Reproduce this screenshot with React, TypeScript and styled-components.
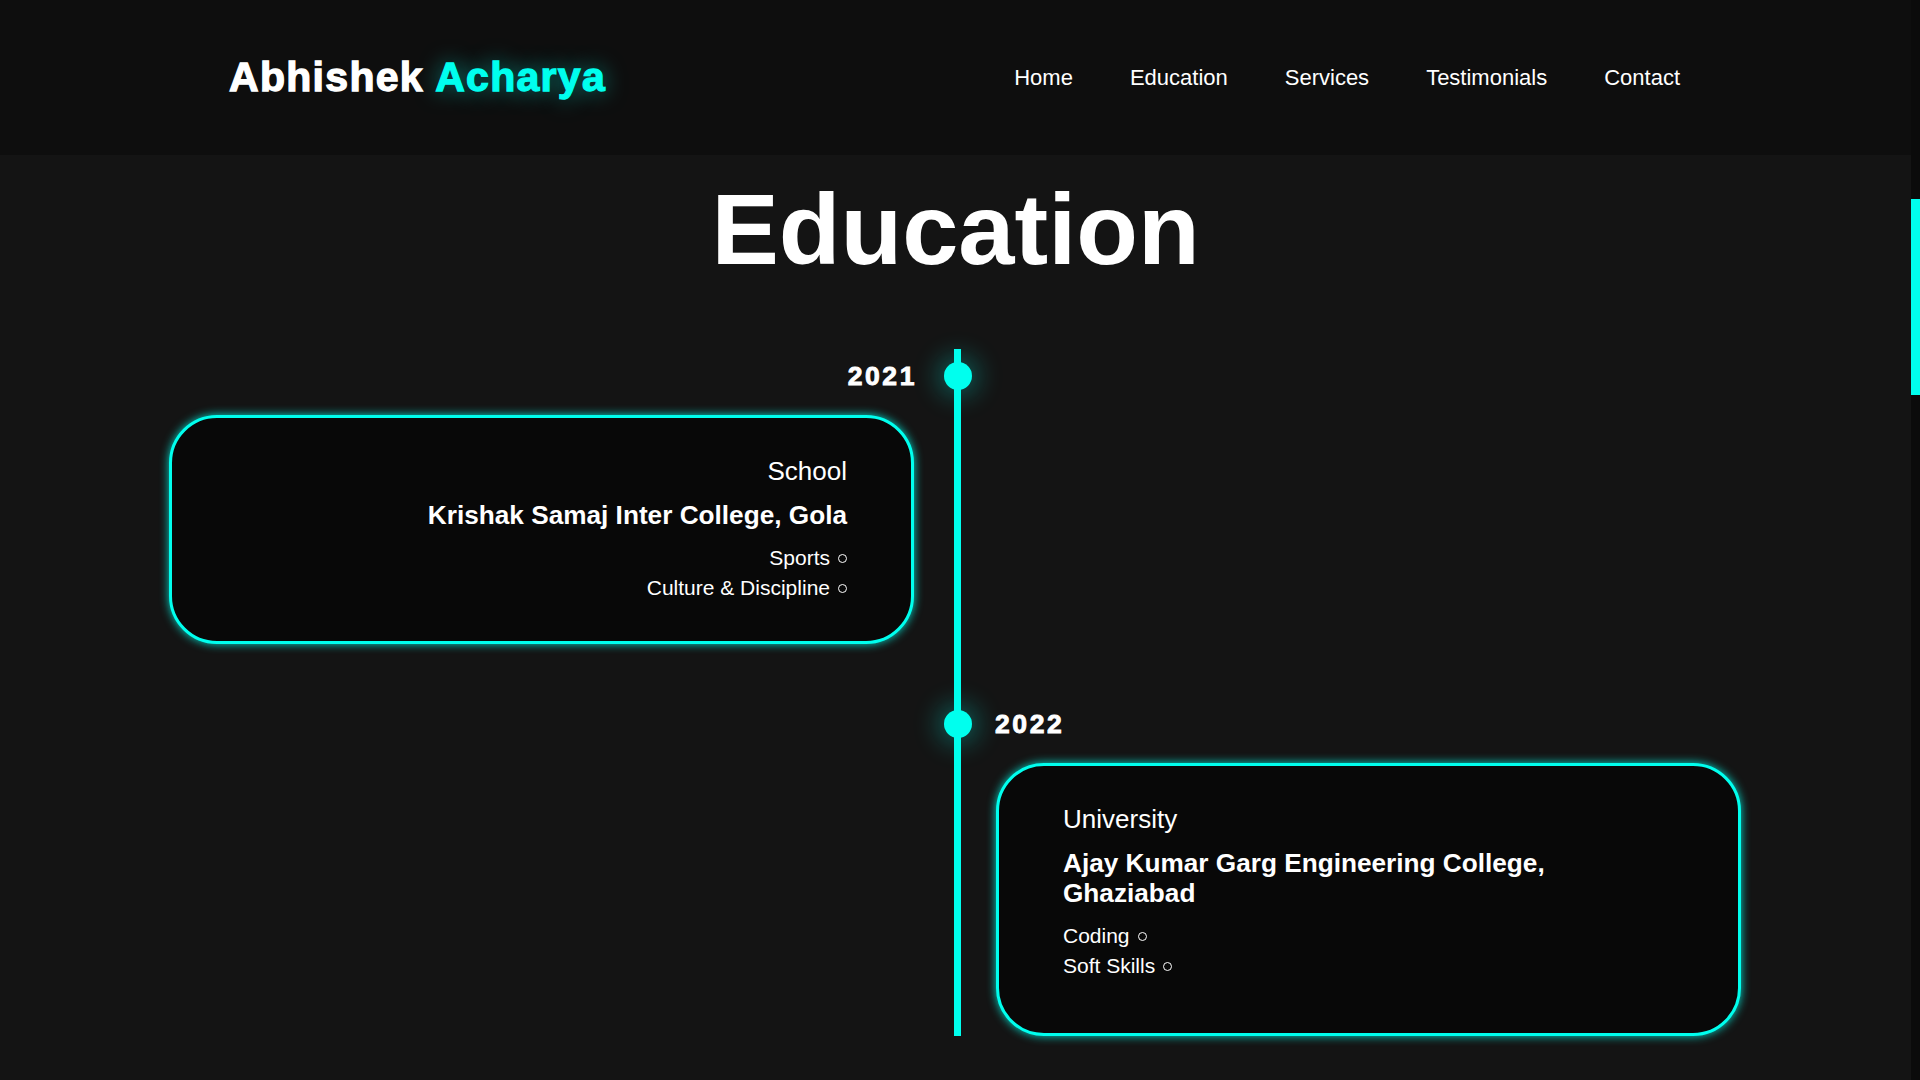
import React from "react";
import styled, { createGlobalStyle } from "styled-components";

const CYAN = "#00ffee";

type Side = "left" | "right";

const GlobalStyle = createGlobalStyle`
  *, *::before, *::after { box-sizing: border-box; }
  html, body {
    margin: 0;
    padding: 0;
    height: 100%;
    overflow: hidden;
    background: #141414;
  }
  body {
    font-family: "Liberation Sans", Arial, Helvetica, sans-serif;
    color: #ffffff;
  }
`;

const Shell = styled.div`
  display: flex;
  width: 100vw;
  height: 100vh;
  overflow: hidden;
`;

const Page = styled.div`
  flex: 1;
  min-width: 0;
  display: flex;
  flex-direction: column;
  background: #141414;
`;

const ScrollTrack = styled.div`
  width: 9px;
  flex-shrink: 0;
  background: #0b0b0b;
  padding-top: 199px;
`;

const ScrollThumb = styled.div`
  height: 196px;
  background: ${CYAN};
`;

const Header = styled.header`
  height: 155px;
  flex-shrink: 0;
  background: #0e0e0e;
  display: flex;
  align-items: center;
  justify-content: space-between;
  padding: 0 231px 0 229px;
`;

const Logo = styled.a`
  font-size: 41px;
  font-weight: 700;
  letter-spacing: 1.3px;
  color: #ffffff;
  -webkit-text-stroke: 1.3px currentColor;
  text-decoration: none;
  white-space: nowrap;
`;

const LogoAccent = styled.span`
  color: ${CYAN};
  text-shadow: 0 0 22px rgba(0, 255, 238, 0.55);
`;

const Nav = styled.nav`
  display: flex;
  align-items: center;
  gap: 57px;
`;

const NavLink = styled.a`
  font-size: 22px;
  color: #ffffff;
  text-decoration: none;
  white-space: nowrap;
`;

const Section = styled.section`
  display: flex;
  flex-direction: column;
  align-items: center;
  padding-top: 17px;
`;

const Title = styled.h2`
  margin: 0;
  font-size: 101px;
  line-height: 115px;
  font-weight: 700;
  color: #ffffff;
`;

const Timeline = styled.div`
  margin-top: 62px;
  display: grid;
  grid-template-columns: 787px 7px 783px;
`;

const Line = styled.div<{ $rows: number }>`
  grid-column: 2;
  grid-row: 1 / ${(p) => p.$rows + 1};
  background: ${CYAN};
`;

const YearLabel = styled.div<{ $side: Side; $row: number; $first: boolean }>`
  grid-column: ${(p) => (p.$side === "left" ? 1 : 3)};
  grid-row: ${(p) => p.$row};
  margin-top: ${(p) => (p.$first ? 0 : 53)}px;
  height: 54px;
  display: flex;
  align-items: center;
  justify-content: ${(p) => (p.$side === "left" ? "flex-end" : "flex-start")};
  padding: ${(p) => (p.$side === "left" ? "0 37px 0 0" : "0 0 0 34px")};
  font-size: 26.5px;
  font-weight: 700;
  letter-spacing: 2.6px;
  -webkit-text-stroke: 0.9px #ffffff;
  color: #ffffff;
`;

const Dot = styled.span<{ $row: number }>`
  grid-column: 2;
  grid-row: ${(p) => p.$row};
  align-self: end;
  justify-self: center;
  width: 28px;
  height: 28px;
  margin: 0 -10.5px 13px;
  border-radius: 50%;
  background: ${CYAN};
  box-shadow: 0 0 26px 6px rgba(0, 255, 238, 0.3);
  position: relative;
  z-index: 1;
`;

const Card = styled.article<{ $side: Side; $row: number; $padBottom: number }>`
  grid-column: ${(p) => (p.$side === "left" ? 1 : 3)};
  grid-row: ${(p) => p.$row};
  justify-self: ${(p) => (p.$side === "left" ? "end" : "start")};
  width: 745px;
  margin: ${(p) => (p.$side === "left" ? "12px 40px 0 0" : "12px 0 0 35px")};
  padding: 38px 64px ${(p) => p.$padBottom}px;
  background: #080808;
  border: 3px solid ${CYAN};
  border-radius: 48px;
  box-shadow: 0 0 10px rgba(0, 255, 238, 0.85);
  text-align: ${(p) => (p.$side === "left" ? "right" : "left")};
`;

const Level = styled.h4`
  margin: 0;
  font-size: 26px;
  line-height: 30px;
  font-weight: 400;
`;

const Institution = styled.h3<{ $side: Side }>`
  margin: 14px 0 0;
  max-width: 590px;
  margin-left: ${(p) => (p.$side === "left" ? "auto" : "0")};
  font-size: 26.2px;
  line-height: 30px;
  font-weight: 700;
`;

const Activities = styled.ul`
  margin: 13px 0 0;
  padding: 0;
  list-style: none;
  font-size: 21px;
  line-height: 29.5px;
`;

const Activity = styled.li`
  &::after {
    content: "";
    display: inline-block;
    width: 9px;
    height: 9px;
    margin-left: 8px;
    border: 1.4px solid #ffffff;
    border-radius: 50%;
    vertical-align: 2px;
  }
`;

type Entry = {
  year: string;
  side: Side;
  level: string;
  institution: string;
  activities: string[];
  padBottom: number;
};

const entries: Entry[] = [
  {
    year: "2021",
    side: "left",
    level: "School",
    institution: "Krishak Samaj Inter College, Gola",
    activities: ["Sports", "Culture & Discipline"],
    padBottom: 39,
  },
  {
    year: "2022",
    side: "right",
    level: "University",
    institution: "Ajay Kumar Garg Engineering College, Ghaziabad",
    activities: ["Coding", "Soft Skills"],
    padBottom: 53,
  },
];

const navItems = ["Home", "Education", "Services", "Testimonials", "Contact"];

export default function App() {
  return (
    <>
      <GlobalStyle />
      <Shell>
        <Page>
          <Header>
            <Logo href="#">
              Abhishek <LogoAccent>Acharya</LogoAccent>
            </Logo>
            <Nav>
              {navItems.map((item) => (
                <NavLink key={item} href="#">
                  {item}
                </NavLink>
              ))}
            </Nav>
          </Header>
          <Section>
            <Title>Education</Title>
            <Timeline>
              <Line $rows={entries.length * 2} />
              {entries.map((e, i) => {
                const row = i * 2 + 1;
                return (
                  <React.Fragment key={e.year}>
                    <YearLabel $side={e.side} $row={row} $first={i === 0}>
                      {e.year}
                    </YearLabel>
                    <Dot $row={row} />
                    <Card $side={e.side} $row={row + 1} $padBottom={e.padBottom}>
                      <Level>{e.level}</Level>
                      <Institution $side={e.side}>{e.institution}</Institution>
                      <Activities>
                        {e.activities.map((a) => (
                          <Activity key={a}>{a}</Activity>
                        ))}
                      </Activities>
                    </Card>
                  </React.Fragment>
                );
              })}
            </Timeline>
          </Section>
        </Page>
        <ScrollTrack>
          <ScrollThumb />
        </ScrollTrack>
      </Shell>
    </>
  );
}
